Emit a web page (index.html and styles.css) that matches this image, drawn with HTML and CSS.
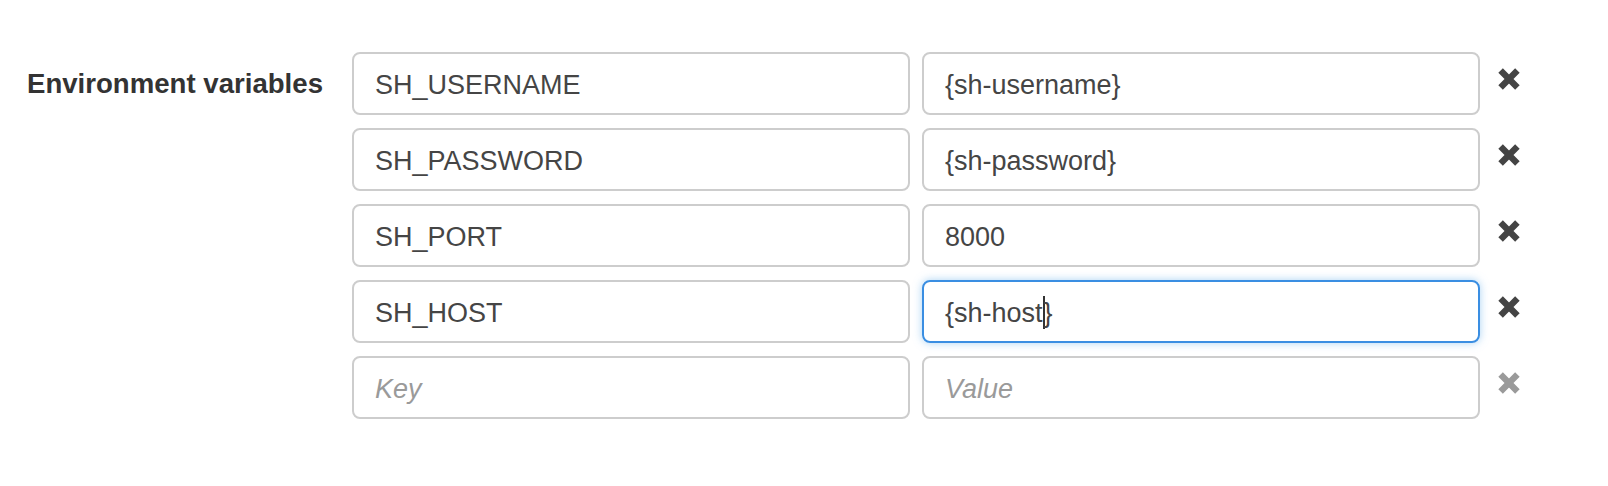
FILE: index.html
```html
<!DOCTYPE html>
<html lang="en">
<head>
<meta charset="utf-8">
<title>Environment variables</title>
<link rel="stylesheet" href="styles.css">
</head>
<body>
<div class="page">
  <div class="form-group">
    <div class="label">Environment variables</div>
    <div class="rows">
      <div class="row">
        <div class="field">SH_USERNAME</div>
        <div class="field">{sh-username}</div>
        <span class="remove"><svg viewBox="0 0 22 22" width="22" height="22"><path d="M2.6 2.6 L19.4 19.4 M19.4 2.6 L2.6 19.4"/></svg></span>
      </div>
      <div class="row">
        <div class="field">SH_PASSWORD</div>
        <div class="field">{sh-password}</div>
        <span class="remove"><svg viewBox="0 0 22 22" width="22" height="22"><path d="M2.6 2.6 L19.4 19.4 M19.4 2.6 L2.6 19.4"/></svg></span>
      </div>
      <div class="row">
        <div class="field">SH_PORT</div>
        <div class="field">8000</div>
        <span class="remove"><svg viewBox="0 0 22 22" width="22" height="22"><path d="M2.6 2.6 L19.4 19.4 M19.4 2.6 L2.6 19.4"/></svg></span>
      </div>
      <div class="row">
        <div class="field">SH_HOST</div>
        <div class="field focused">{sh-host<span class="caret"></span>}</div>
        <span class="remove"><svg viewBox="0 0 22 22" width="22" height="22"><path d="M2.6 2.6 L19.4 19.4 M19.4 2.6 L2.6 19.4"/></svg></span>
      </div>
      <div class="row">
        <div class="field placeholder">Key</div>
        <div class="field placeholder">Value</div>
        <span class="remove muted"><svg viewBox="0 0 22 22" width="22" height="22"><path d="M2.6 2.6 L19.4 19.4 M19.4 2.6 L2.6 19.4"/></svg></span>
      </div>
    </div>
  </div>
</div>
</body>
</html>
```

FILE: styles.css
```css
html, body {
  margin: 0;
  padding: 0;
  background: #fff;
}

.page {
  padding: 52px 0 0 27px;
  font-family: "Liberation Sans", Arial, Helvetica, sans-serif;
}

.form-group {
  display: flex;
  align-items: flex-start;
}

.label {
  width: 325px;
  flex: 0 0 325px;
  font-size: 27.6px;
  font-weight: bold;
  line-height: 63px;
  color: #333;
  white-space: nowrap;
}

.rows {
  display: flex;
  flex-direction: column;
  gap: 13px;
}

.row {
  display: flex;
  align-items: flex-start;
  gap: 12px;
}

.field {
  box-sizing: border-box;
  width: 558px;
  height: 63px;
  border: 2px solid #cdcdcd;
  border-radius: 8px;
  padding: 4px 21px 0;
  font-size: 27px;
  line-height: 55px;
  color: #454545;
  white-space: nowrap;
  overflow: hidden;
}

.field.focused {
  border-color: #3a8ee2;
  box-shadow: 0 0 9px rgba(102, 175, 233, 0.55);
}

.field.placeholder {
  color: #9a9a9a;
  font-style: italic;
}

.caret {
  display: inline-block;
  width: 2px;
  height: 33px;
  background: #333;
  vertical-align: -7px;
  margin: 0 -1px 0 0;
}

.remove {
  display: block;
  width: 22px;
  height: 22px;
  margin: 16px 0 0 6px;
}

.remove svg {
  display: block;
  stroke: #444;
  stroke-width: 6.4;
  stroke-linecap: butt;
  fill: none;
}

.remove.muted svg {
  stroke: #9a9a9a;
}
```
